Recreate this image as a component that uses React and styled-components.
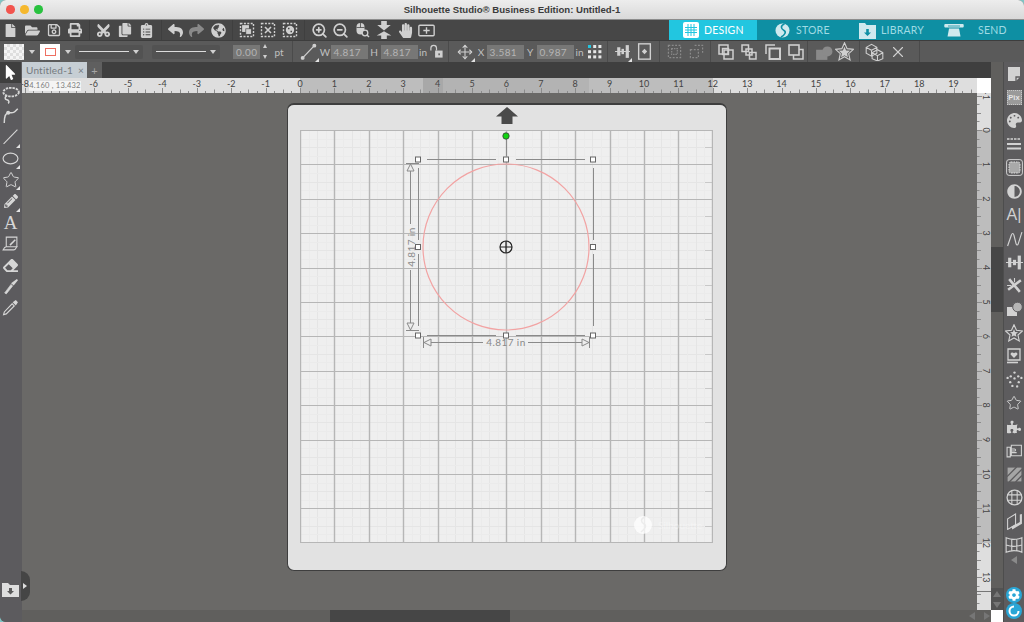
import React from 'react'
import styled, { createGlobalStyle } from 'styled-components'
import {
  FaFile, FaFolderOpen, FaRegSave, FaPrint, FaCut, FaCopy, FaClipboardList,
  FaReply, FaShare, FaGlobeAmericas, FaHandPaper, FaMousePointer, FaPencilAlt,
  FaEraser, FaPalette, FaAdjust, FaPuzzlePiece, FaCog
} from 'react-icons/fa'
import { ZoomIn, ZoomOut, Move, X, Star } from 'lucide-react'

const GlobalStyle = createGlobalStyle`
  html, body {
    margin: 0;
    padding: 0;
    background: #7fc4c4;
  }
  * { box-sizing: border-box; }
`

const Shell = styled.div`
  width: 1024px;
  height: 622px;
  display: flex;
  flex-direction: column;
  overflow: hidden;
  border-radius: 6px 6px 0 6px;
  font-family: "Lato", "Liberation Sans", sans-serif;
  background: #6a6967;
`

const TitleBar = styled.header`
  height: 20px;
  flex: none;
  display: flex;
  align-items: center;
  justify-content: center;
  position: relative;
  background: linear-gradient(#ededed, #d9d9d9);
  border-bottom: 1px solid #8d8d8d;
  font: bold 9.6px "Liberation Sans", sans-serif;
  color: #3b3b3b;
`

const Lights = styled.div`
  position: absolute;
  left: 6px;
  top: 5px;
  display: flex;
  gap: 5.5px;
`

const Light = styled.span`
  width: 8.5px;
  height: 8.5px;
  border-radius: 50%;
  background: ${p => p.$color};
`

const TopRow = styled.div`
  height: 21px;
  flex: none;
  display: flex;
  background: #474747;
  border-bottom: 1px solid #3d3d3d;
`

const SecondRow = styled.div`
  height: 21px;
  flex: none;
  display: flex;
  background: #5a5a5a;
  color: #d0d0d0;
`

const Group = styled.div`
  display: flex;
  align-items: center;
  flex: none;
  padding: ${p => p.$pad || '0 3px'};
  border-right: 1px solid #3f3f3f;
  color: #d0d0d0;
  &:last-of-type { border-right: 0; }
`

const Seg = styled.div`
  display: flex;
  align-items: center;
  flex: none;
  width: ${p => p.$w}px;
  padding-left: ${p => p.$pad || 0}px;
  border-right: 1px solid #4b4b4b;
`

const Btn = styled.span`
  flex: none;
  position: relative;
  display: flex;
  align-items: center;
  justify-content: center;
  width: ${p => p.$w || 21.5}px;
  height: 21px;
  color: ${p => (p.$dim ? '#8a8a8a' : 'inherit')};
  ${p => p.$corner && `
    &::after {
      content: '';
      position: absolute;
      right: 1px;
      bottom: 0;
      border-style: solid;
      border-width: 0 0 4px 4px;
      border-color: transparent transparent #e2e2e2 transparent;
    }
  `}
`

const CutIcon = styled(FaCut)`
  transform: rotate(-90deg);
`

const Tabs = styled.nav`
  margin-left: auto;
  width: 355px;
  height: 20px;
  display: flex;
  background: #0e8fa3;
`

const TabItem = styled.div`
  display: flex;
  align-items: center;
  width: ${p => p.$w}px;
  padding-left: ${p => p.$pad}px;
  gap: ${p => p.$gap}px;
  font-size: 10.5px;
  letter-spacing: 0.02em;
  color: ${p => (p.$active ? '#ffffff' : '#9fdbe4')};
  background: ${p => (p.$active ? '#22c6e0' : 'transparent')};
`

const Swatch = styled.span`
  flex: none;
  width: 20px;
  height: 16px;
  background: #fff;
  ${p => p.$checker && `
    background: repeating-conic-gradient(#dedede 0 25%, #f4f4f4 0 50%) 0 0 / 6px 6px;
  `}
  display: flex;
  align-items: center;
  justify-content: center;
`

const StrokeBox = styled.span`
  width: 11px;
  height: 8px;
  border: 1px solid #ee6f62;
`

const Caret = styled.span`
  flex: none;
  width: ${p => p.$w}px;
  display: flex;
  justify-content: center;
  &::before {
    content: '';
    border-style: solid;
    border-width: 4px 3px 0 3px;
    border-color: #d0d0d0 transparent transparent transparent;
  }
`

const LineSelect = styled.div`
  flex: none;
  width: 68px;
  height: 14px;
  margin-right: ${p => p.$mr}px;
  padding: 0 4px;
  display: flex;
  align-items: center;
  justify-content: space-between;
  background: #525252;
  border-radius: 2px;
  &::before {
    content: '';
    width: 50px;
    height: 1px;
    background: #dcdcdc;
  }
  &::after {
    content: '';
    border-style: solid;
    border-width: 4px 3px 0 3px;
    border-color: #d0d0d0 transparent transparent transparent;
  }
`

const NumInput = styled.div`
  flex: none;
  width: ${p => p.$w || 37}px;
  height: 14px;
  padding-left: 3px;
  background: #777776;
  color: #b4b4b4;
  font: 10px/14px "Lato", sans-serif;
  letter-spacing: 0.04em;
`

const Spinner = styled.span`
  flex: none;
  width: 9px;
  height: 15px;
  display: flex;
  flex-direction: column;
  justify-content: space-between;
  align-items: center;
  &::before {
    content: '';
    border-style: solid;
    border-width: 0 2.5px 4px 2.5px;
    border-color: transparent transparent #cfcfcf transparent;
  }
  &::after {
    content: '';
    border-style: solid;
    border-width: 4px 2.5px 0 2.5px;
    border-color: #cfcfcf transparent transparent transparent;
  }
`

const Label = styled.span`
  flex: none;
  width: ${p => p.$w}px;
  text-align: center;
  color: #c0c0c0;
  font-size: 10px;
`

const Body = styled.div`
  flex: 1;
  min-height: 0;
  display: flex;
`

const LeftBar = styled.aside`
  width: 22px;
  flex: none;
  display: flex;
  flex-direction: column;
  position: relative;
  background: #5c5b5e;
  color: #d6d6d6;
`

const ToolBtn = styled(Btn)`
  width: 21px;
  height: 21.4px;
  background: ${p => (p.$active ? '#3f3f3f' : 'transparent')};
  color: ${p => (p.$active ? '#fff' : 'inherit')};
`

const ToolGlyph = styled.span`
  font: 19px/1 "Liberation Serif", serif;
  color: #d6d6d6;
`

const ImportBtn = styled(Btn)`
  margin-top: auto;
  margin-bottom: 22px;
  width: 21px;
  color: #dedede;
`

const SlideHandle = styled.span`
  position: absolute;
  left: 21px;
  bottom: 21px;
  width: 9px;
  height: 30px;
  border-radius: 0 15px 15px 0;
  background: #454545;
  display: flex;
  align-items: center;
  padding-left: 2px;
  z-index: 2;
  &::before {
    content: '';
    border-style: solid;
    border-width: 3px 0 3px 4px;
    border-color: transparent transparent transparent #ddd;
  }
`

const Center = styled.main`
  width: 969px;
  flex: none;
  display: flex;
  flex-direction: column;
`

const TabStrip = styled.div`
  height: 16px;
  flex: none;
  display: flex;
  background: #3f3f3f;
`

const DocTab = styled.div`
  width: 65px;
  display: flex;
  align-items: center;
  justify-content: space-between;
  padding: 0 3px 0 4px;
  background: #c6ced4;
  color: #757a7e;
  font-size: 10px;
  letter-spacing: 0.02em;
`

const PlusTab = styled.div`
  width: 15px;
  display: flex;
  align-items: center;
  justify-content: center;
  background: #5f5f5f;
  color: #a5a5a5;
  font-size: 11px;
`

const RulerWrap = styled.div`
  position: relative;
  height: 15px;
  flex: none;
  background: #dedede;
  svg { display: block; }
`

const CoordTip = styled.span`
  position: absolute;
  left: 7px;
  top: 3px;
  width: 52px;
  height: 10px;
  background: #f4f4f4;
  color: #7c7c7c;
  font: 7.5px/10px "Lato", sans-serif;
  letter-spacing: 0.03em;
  text-align: center;
`

const CanvasRow = styled.div`
  flex: 1;
  min-height: 0;
  display: flex;
`

const Canvas = styled.section`
  flex: 1;
  min-width: 0;
  padding: 10px 0 0 265px;
  background: #6a6967;
`

const VRuler = styled.div`
  width: 14px;
  flex: none;
  svg {
    display: block;
    overflow: visible;
  }
`

const Mat = styled.div`
  width: 440px;
  height: 468px;
  display: flex;
  flex-direction: column;
  padding-left: 12px;
  border: 1px solid #3e3e3e;
  border-top-width: 2px;
  border-radius: 7px;
  background: #e2e2e2;
`

const MatHead = styled.div`
  width: 413px;
  height: 25px;
  flex: none;
  display: flex;
  align-items: flex-start;
  justify-content: center;
  padding-top: 2px;
  color: #4a4a4a;
`

const GridFrame = styled.div`
  position: relative;
  width: 413px;
  height: 413px;
  background: #efefef;
  svg { display: block; }
`

const SelectionLayer = styled.svg`
  position: absolute;
  left: 0;
  top: 0;
  overflow: visible;
`

const HScroll = styled.div`
  height: 12px;
  flex: none;
  display: flex;
  padding-left: 308px;
  background: #605f5d;
`

const HThumb = styled.span`
  width: 180px;
  background: #464646;
`

const ScrollArrows = styled.span`
  margin-left: auto;
  margin-right: 1px;
  display: flex;
  width: 21px;
  align-items: center;
  justify-content: space-between;
`

const ArrowLeft = styled.span`
  border-style: solid;
  border-width: 4.5px 6px 4.5px 0;
  border-color: transparent #767676 transparent transparent;
`

const ArrowRight = styled.span`
  border-style: solid;
  border-width: 4.5px 0 4.5px 6px;
  border-color: transparent transparent transparent #767676;
`

const VScroll = styled.div`
  width: 12px;
  flex: none;
  display: flex;
  flex-direction: column;
  padding-top: 185px;
  background: #605f5d;
`

const VThumb = styled.span`
  height: 65px;
  flex: none;
  background: #464646;
`

const VArrows = styled.span`
  margin-top: auto;
  height: 22px;
  display: flex;
  flex-direction: column;
  align-items: center;
  justify-content: space-around;
  background: #525252;
  &::before {
    content: '';
    border-style: solid;
    border-width: 0 4.5px 6px 4.5px;
    border-color: transparent transparent #767676 transparent;
  }
  &::after {
    content: '';
    border-style: solid;
    border-width: 6px 4.5px 0 4.5px;
    border-color: #767676 transparent transparent transparent;
  }
`

const Corner = styled.span`
  height: 12px;
  flex: none;
  background: #fff;
`

const RightBar = styled.aside`
  width: 21px;
  flex: none;
  display: flex;
  flex-direction: column;
  align-items: center;
  border-left: 1px solid #4d4d4d;
  background: #5d5c5e;
  color: #d2d2d2;
`

const PanelBtn = styled(Btn)`
  width: 20px;
  height: 23.55px;
`

const PanelText = styled.span`
  font: 16px/1 "Liberation Sans", sans-serif;
  color: #d2d2d2;
`

const PixText = styled.span`
  display: block;
  width: 15px;
  height: 15px;
  border: 1px dotted #c8c8c8;
  background: #9a9a9a;
  color: #e6e6e6;
  font: bold 7.5px/13px "Liberation Sans", sans-serif;
  text-align: center;
`

const Collapse = styled.span`
  flex: none;
  border-style: solid;
  border-width: 4px 6px 4px 0;
  border-color: transparent #8a8a8a transparent transparent;
`

const RoundBtn = styled.span`
  margin-top: ${p => p.$mt}px;
  flex: none;
  width: 16px;
  height: 16px;
  border-radius: 50%;
  display: flex;
  align-items: center;
  justify-content: center;
  background: #2aa6d6;
  color: #fff;
`

const Ico = ({ s = 16, children }) => (
  <svg width={s} height={s} viewBox="0 0 16 16" fill="none" stroke="currentColor" strokeWidth="1.3">{children}</svg>
)

const DashedSq = () => <rect x="1.5" y="1.5" width="13" height="13" strokeDasharray="2 1.4" strokeWidth="1.4" />

const GroupIcon = () => (
  <Ico><DashedSq /><rect x="3.8" y="3.8" width="5.5" height="5.5" fill="currentColor" /><rect x="6.8" y="6.8" width="5.5" height="5.5" fill="currentColor" stroke="#474747" strokeWidth=".7" /></Ico>
)
const UngroupIcon = () => (
  <Ico><DashedSq /><path d="M5 5l6 6M11 5l-6 6" strokeWidth="1.6" /></Ico>
)
const CompoundIcon = () => (
  <Ico><DashedSq /><circle cx="8" cy="8" r="4.2" fill="currentColor" stroke="none" /><path d="M6 6.5h1.5M8.5 9.5H10" stroke="#474747" /></Ico>
)
const MouseZoomIcon = () => (
  <Ico><rect x="2.5" y="1" width="8" height="11.5" rx="4" fill="currentColor" stroke="none" /><path d="M2.5 5.5h8M6.5 1v4.5" stroke="#474747" strokeWidth=".8" /><circle cx="11" cy="11" r="2.8" fill="#474747" /><path d="M13 13l2 2" strokeWidth="1.4" /></Ico>
)
const PanVertIcon = () => (
  <Ico s={18}><path d="M5.5 0h5v3.5H14L8 8.5 2 3.5h3.5zM8 9l6.5 3.8h-4V16h-5v-3.2h-4z" fill="currentColor" stroke="none" /></Ico>
)
const FitIcon = () => (
  <Ico s={17}><rect x=".8" y="3" width="14.4" height="10" rx="1" /><path d="M8 5v6M5 8h6" /></Ico>
)

const LineIcon = () => (
  <Ico s={17}><path d="M2.5 14L13.5 2.5" strokeWidth="1.2" /><circle cx="2.5" cy="14" r="1.2" fill="currentColor" /><circle cx="13.5" cy="2.5" r="1.2" fill="currentColor" /></Ico>
)
const LockIcon = () => (
  <Ico s={15}><path d="M2 7V4.5a3 3 0 0 1 6 0V7" /><rect x="6.5" y="7" width="8" height="7.5" fill="currentColor" stroke="none" /><rect x="10" y="10" width="1.6" height="2" fill="#5a5a5a" stroke="none" /></Ico>
)
const DotsIcon = () => {
  const spots = []
  for (let r = 0; r < 3; r++) for (let c = 0; c < 3; c++) spots.push([r, c])
  return (
    <svg width="14" height="14" viewBox="0 0 14 14">
      {spots.map(([r, c]) => (
        <rect key={`${r}-${c}`} x={c * 5.2} y={r * 5.2} width="3" height="3" fill={r + c === 0 ? '#22c6e0' : '#e6e6e6'} />
      ))}
    </svg>
  )
}
const DistIcon = () => (
  <Ico s={17}><path d="M1 8h14" strokeWidth="1" /><rect x="3" y="4" width="3" height="8" fill="currentColor" stroke="none" /><rect x="7" y="5.5" width="2.4" height="5" fill="currentColor" stroke="none" /><rect x="11" y="2" width="3" height="12" fill="currentColor" stroke="none" /></Ico>
)
const PageCenterIcon = () => (
  <Ico s={17}><rect x="2.5" y=".8" width="11" height="14.4" /><path d="M8 5.5l2.5 2.5L8 10.5 5.5 8z" fill="currentColor" stroke="none" /></Ico>
)
const DimSqOne = () => (
  <Ico s={15}><rect x="1.5" y="1.5" width="13" height="13" strokeDasharray="2 1.6" /><rect x="5" y="5" width="6" height="6" strokeDasharray="1.5 1" /></Ico>
)
const DimSqTwo = () => (
  <Ico s={15}><path d="M6 1.5h8.5V10" strokeDasharray="2 1.6" /><rect x="1.5" y="6" width="8.5" height="8.5" strokeDasharray="2 1.6" /></Ico>
)
const ArrangeA = () => (
  <Ico><rect x="1" y="1" width="9" height="9" strokeWidth="1.5" /><rect x="6" y="6" width="9" height="9" strokeWidth="1.5" /><rect x="4.5" y="4.5" width="6" height="6" strokeWidth="1.4" /></Ico>
)
const ArrangeB = () => (
  <Ico><rect x="1" y="1" width="6.5" height="6.5" strokeWidth="1.5" /><rect x="8.5" y="8.5" width="6.5" height="6.5" strokeWidth="1.5" /><rect x="5" y="5" width="6" height="6" strokeWidth="1.5" /></Ico>
)
const ArrangeC = () => (
  <Ico><path d="M1 10V1h9" strokeWidth="1.5" /><rect x="4.5" y="4.5" width="10.5" height="10.5" strokeWidth="2" /></Ico>
)
const ArrangeD = () => (
  <Ico><rect x="1" y="1" width="10" height="10" strokeWidth="1.6" /><path d="M11 5.5h4V15H5.5v-4" strokeWidth="1.5" /></Ico>
)
const WeldIcon = () => (
  <Ico s={18}><rect x="1" y="6" width="10" height="9" fill="currentColor" stroke="none" /><circle cx="11" cy="7.5" r="4.5" fill="currentColor" stroke="none" /></Ico>
)
const StarOutlined = () => (
  <svg width="19" height="19" viewBox="0 0 24 24">
    <path d="M12 1l3.3 7.4 8 .9-6 5.4 1.7 7.9-7-4-7 4 1.7-7.9-6-5.4 8-.9z" fill="none" stroke="#d0d0d0" strokeWidth="1.4" />
    <path d="M12 6l2 4.6 5 .5-3.7 3.3 1 4.9-4.3-2.5-4.3 2.5 1-4.9L5 11.1l5-.5z" fill="#d0d0d0" />
  </svg>
)
const CubesIcon = () => (
  <Ico s={19}><path d="M1 4.5L5.5 2 10 4.5v5L5.5 12 1 9.5zM1 4.5L5.5 7 10 4.5M5.5 7v5" strokeWidth=".9" /><path d="M6 9l4.5-2.5L15 9v5l-4.5 2-4.5-2zM6 9l4.5 2.5L15 9M10.5 11.5V16" strokeWidth=".9" /></Ico>
)

const LassoIcon = () => (
  <Ico s={19}><ellipse cx="8.5" cy="6" rx="6.5" ry="3.6" strokeWidth="1.6" strokeDasharray="2 .8" /><path d="M5 9c-2 1-2 3 0 3.5s2 2 1 3" strokeWidth="1.3" /></Ico>
)
const CurveIcon = () => (
  <Ico s={18}><path d="M2 15c0-5 1-9 4-9 3.5 0 4 1 8-3.5" strokeWidth="1.3" /><circle cx="5.5" cy="6" r="1.8" fill="currentColor" stroke="none" /></Ico>
)
const ToolLine = () => <Ico s={17}><path d="M1.5 15L14.5 1.5" strokeWidth="1" /></Ico>
const ToolEllipse = () => <Ico s={17}><ellipse cx="8" cy="8" rx="7" ry="5" strokeWidth="1.1" /></Ico>
const SketchIcon = () => (
  <Ico s={17}><path d="M4 2h10v9H4zM1 14c1-2 2-3 3-3h10c-1 1-1 3-3 3z" strokeWidth="1" /><path d="M7 9l5-5 1 1-5 5z" fill="currentColor" stroke="none" /></Ico>
)
const KnifeIcon = () => (
  <Ico s={17}><path d="M14 1l1 1-4 5-2.5-2z" fill="currentColor" stroke="none" /><path d="M8.5 6L10 7.5 4 15 2.5 14z" strokeWidth=".6" fill="currentColor" /></Ico>
)
const DropperIcon = () => (
  <Ico s={17}><path d="M10 3l3-2 2 2-2 3z" fill="currentColor" stroke="none" /><path d="M9.5 4.5l2 2L4 14l-2.5.8.7-2.6z" strokeWidth="1.1" /></Ico>
)
const ImportIcon = () => (
  <svg width="17" height="16" viewBox="0 0 17 16">
    <path d="M0 1h6l2 2h9v12H0z" fill="#dedede" />
    <path d="M7 6h3v3h2l-3.5 3.5L5 9h2z" fill="#5a5a5a" />
  </svg>
)

const PageIcon = () => (
  <Ico s={16}><path d="M2 1h12v10l-4 4H2z" fill="currentColor" stroke="none" /><path d="M14 11h-4v4" stroke="#5d5c5e" /></Ico>
)
const LinesIcon = () => (
  <Ico s={16}><path d="M1 3h14" strokeDasharray="2.5 1" strokeWidth="1.4" /><path d="M1 8h14M1 12.5h14" strokeWidth="2" /></Ico>
)
const FrameIcon = () => (
  <svg width="17" height="17" viewBox="0 0 17 17">
    <rect x=".6" y=".6" width="15.8" height="15.8" rx="2.5" fill="none" stroke="#d2d2d2" strokeWidth="1" />
    <rect x="3" y="3" width="11" height="11" rx="2" fill="#a9a9a9" stroke="#e2e2e2" strokeWidth="1" strokeDasharray="1.5 1" />
  </svg>
)
const TextCurve = () => (
  <Ico s={17}><path d="M1.5 15L5 5c1-2.5 2-2 2.5 0l2 8c.5 1.5 1.5 1.5 2 0L15 2" strokeWidth="1.1" /></Ico>
)
const AlignBars = () => (
  <Ico s={17}><path d="M0 8h16" strokeWidth="1" /><rect x="2" y="3.5" width="3" height="9" fill="currentColor" stroke="none" /><rect x="6.5" y="5.5" width="3" height="5" fill="currentColor" stroke="none" /><rect x="11" y="1.5" width="3" height="13" fill="currentColor" stroke="none" /></Ico>
)
const SparkIcon = () => (
  <Ico s={17}><path d="M3 2l10 12M14 3L2 12" strokeWidth="2.4" /><path d="M8 1v4M1 8h4" strokeWidth="1" /></Ico>
)
const ShapesIcon = () => (
  <svg width="17" height="16" viewBox="0 0 17 16">
    <rect x="1" y="6" width="10" height="9" fill="#d2d2d2" />
    <circle cx="11.5" cy="6" r="4.8" fill="#b5b5b5" stroke="#5d5c5e" />
  </svg>
)
const StarBadge = () => (
  <svg width="18" height="18" viewBox="0 0 24 24">
    <path d="M12 1l3.3 7.4 8 .9-6 5.4 1.7 7.9-7-4-7 4 1.7-7.9-6-5.4 8-.9z" fill="none" stroke="#d2d2d2" strokeWidth="1.5" />
    <path d="M12 7l1.5 3.5 3.8.4-2.8 2.5.8 3.7-3.3-1.9-3.3 1.9.8-3.7-2.8-2.5 3.8-.4z" fill="#d2d2d2" />
  </svg>
)
const HeartSheet = () => (
  <Ico s={16}><path d="M2 1h12v11H2z" strokeWidth="1.3" /><path d="M8 10L4.8 6.8C3.8 5 6.5 3.5 8 5.3 9.5 3.5 12.2 5 11.2 6.8z" fill="currentColor" stroke="none" /><path d="M1 14.5h11" strokeWidth="1.6" /></Ico>
)
const StarDots = () => {
  const pts = [[8, 1.5], [4.5, 5], [11.5, 5], [1.5, 6.5], [14.5, 6.5], [8, 7], [4, 10.5], [12, 10.5], [6, 14], [10.5, 14.5]]
  return (
    <svg width="17" height="17" viewBox="0 0 16 16">
      {pts.map(([x, y]) => <circle key={`${x}-${y}`} cx={x} cy={y} r="1.1" fill="#d2d2d2" />)}
    </svg>
  )
}
const FingersIcon = () => (
  <Ico s={17}><path d="M1 5h3v9H1zM5 3h9.5v10H5zM5 6.5h3a1 1 0 0 1 0 2H5M5 10h5" strokeWidth="1" /></Ico>
)
const HatchIcon = () => (
  <Ico s={17}><rect x="1.5" y="1.5" width="13" height="13" fill="#a5a5a5" stroke="none" /><path d="M1 10l9-9M3 15L15 3M9 15l6-6" stroke="#5d5c5e" strokeWidth="1.3" /></Ico>
)
const GlobeGrid = () => (
  <Ico s={17}><circle cx="8" cy="8" r="7" strokeWidth="1.2" /><path d="M1 5.5h14M1 10.5h14M5.5 1v14M10.5 1v14" strokeWidth="1" /></Ico>
)
const SkewIcon = () => (
  <Ico s={17}><path d="M1.5 5.5L9 1v10l-7.5 4.5z" strokeWidth="1" /><path d="M5 13l8-4.5V1.5l2-.5v9l-9 5.5z" fill="currentColor" stroke="none" /></Ico>
)
const WarpIcon = () => (
  <Ico s={18}><path d="M1 1.5c4.5 2 9.5 2 14 0v13c-4.5-2-9.5-2-14 0zM6 2.7v10.600M10.500 2.700v10.600M1 8c4.500 1.500 9.500 1.500 14 0" strokeWidth="1" /></Ico>
)
const RingIcon = () => (
  <svg width="12" height="12" viewBox="0 0 12 12">
    <path d="M10.5 6A4.5 4.5 0 1 1 6 1.5" fill="none" stroke="#fff" strokeWidth="2" />
  </svg>
)

const DesignIcon = () => (
  <svg width="16" height="16" viewBox="0 0 16 16">
    <rect width="16" height="16" rx="2" fill="#fff" />
    <path d="M2 5.5h12M2 8h12M2 10.5h12M5 2v12M8 2v12M11 2v12" stroke="#22c6e0" strokeWidth="1" />
  </svg>
)
const StoreIcon = () => (
  <svg width="15" height="15" viewBox="0 0 15 15">
    <circle cx="7.5" cy="7.5" r="7" fill="#cfe9ee" />
    <path d="M9.5 1C5 2.5 6 6 9 7.5c2.5 1.3 1 4.5-3 6.5" fill="none" stroke="#0e8fa3" strokeWidth="1.6" />
  </svg>
)
const LibraryIcon = () => (
  <svg width="17" height="17" viewBox="0 0 17 17">
    <path d="M0 1h6l1.5 2H17v14H0z" fill="#cfe9ee" />
    <path d="M7.2 7h2.600v3.500H12L8.500 14 5 10.500h2.200z" fill="#0e8fa3" />
  </svg>
)
const SendIcon = () => (
  <svg width="20" height="14" viewBox="0 0 20 14">
    <path d="M1 1h18c1 0 1 3.5 0 3.5H1c-1 0-1-3.5 0-3.5z" fill="#cfe9ee" />
    <path d="M5 5.5h10l1.5 8h-13z" fill="#cfe9ee" />
    <path d="M4 3h12" stroke="#0e8fa3" strokeWidth=".8" />
  </svg>
)

const UpArrow = () => (
  <svg width="22" height="17" viewBox="0 0 22 17">
    <path d="M11 0l11 9.5h-5.5V17h-11V9.5H0z" fill="currentColor" />
  </svg>
)

const PX = 34.4
const range = (a, b) => Array.from({ length: b - a + 1 }, (_, i) => a + i)
const crisp = v => Math.round(v) + 0.5

const TopRuler = () => {
  const x0 = 278
  const ticks = range(-32, 80)
  return (
    <svg width="969" height="15">
      <rect x="278" width="413" height="15" fill="#bdbdbd" />
      <rect x="401" width="166" height="15" fill="#b3b3b3" />
      <rect x="401" width="20" height="15" fill="#a8a8a8" />
      <rect x="955" width="14" height="15" fill="#ffffff" />
      {ticks.map(i => {
        const x = crisp(x0 + (i * PX) / 4)
        if (x > 954) return null
        const h = i % 4 === 0 ? 5 : i % 2 === 0 ? 3.5 : 2
        return <line key={i} x1={x} x2={x} y1={15 - h} y2="15" stroke="#8b8b8b" />
      })}
      {range(-8, 19).filter(n => n !== -7).map(n => (
        <text key={n} x={x0 + n * PX} y="9" textAnchor="middle" fontFamily="Lato, sans-serif" fontSize="9" fill="#444">{n}</text>
      ))}
    </svg>
  )
}

const SideRuler = () => {
  const y0 = 37
  return (
    <svg width="14" height="517">
      <rect width="14" height="517" fill="#dedede" />
      <rect y="37" width="14" height="413" fill="#bdbdbd" />
      {range(-6, 76).map(i => {
        const y = crisp(y0 + (i * PX) / 4)
        if (y < 0) return null
        const w = i % 4 === 0 ? 5 : i % 2 === 0 ? 4 : 2.5
        return <line key={i} x1="0" x2={w} y1={y} y2={y} stroke="#8b8b8b" />
      })}
      {range(-1, 13).map(n => (
        <text key={n} transform={`translate(5.5 ${y0 + n * PX}) rotate(90)`} textAnchor="middle" fontFamily="Lato, sans-serif" fontSize="9" fill="#444">{n}</text>
      ))}
      <line x1="0" x2="14" y1="498.5" y2="498.5" stroke="#777" />
    </svg>
  )
}

const MatGrid = () => (
  <svg width="413" height="413">
    {range(0, 48).map(i => {
      const p = crisp((i * PX) / 4)
      const c = i % 2 === 0 ? '#e5e5e5' : '#ebebeb'
      return i % 4 === 0 ? null : (
        <g key={i} stroke={c}>
          <line x1={p} x2={p} y1="0" y2="413" />
          <line x1="0" x2="413" y1={p} y2={p} />
        </g>
      )
    })}
    {range(0, 11).map(i => {
      const y = crisp((i + 0.5) * PX)
      return <line key={i} x1="405" x2="413" y1={y} y2={y} stroke="#c8c8c8" />
    })}
    {range(0, 12).map(i => {
      const p = Math.min(crisp(i * PX), 412.5)
      return (
        <g key={i} stroke="#b6b6b6">
          <line x1={p} x2={p} y1="0" y2="413" strokeWidth="1.4" />
          <line x1="0" x2="413" y1={p} y2={p} />
        </g>
      )
    })}
  </svg>
)

const Handle = ({ x, y }) => <rect x={x - 2.5} y={y - 2.5} width="5" height="5" fill="#fff" stroke="#666" strokeWidth="1" />

// selection box around the circle, page coordinates minus the grid's corner
const Selection = () => {
  const left = 118
  const midX = 206
  const right = 293
  const top = 29.5
  const midY = 117
  const bottom = 205.5
  const ink = '#8a8a8a'
  return (
    <SelectionLayer width="413" height="413" viewBox="0 0 413 413">
      <circle cx={midX} cy={midY} r="83" fill="none" stroke="#f2a3a3" strokeWidth="1.2" />
      <g stroke={ink} strokeWidth="1" fill="none">
        <path d={`M${midX + .5} 9V26`} />
        <path d={`M127 ${top}H196M216 ${top}H285`} />
        <path d={`M127 ${bottom}H196M216 ${bottom}H285`} />
        <path d={`M${left + .5} 38V110M${left + .5} 124V196`} />
        <path d={`M${right + .5} 38V110M${right + .5} 124V196`} />
        <path d="M110.5 33V94M110.5 140V201M106 33.5H119M106 200.5H119" />
        <path d="M110.5 34l-3.5 7h7zM110.5 200l-3.5-7h7z" fill="#eee" />
        <path d="M123.5 207V218M289.5 207V218M124 212.5H183M228 212.5H289" />
        <path d="M124 212.5l7-3.5v7zM289 212.5l-7-3.5v7z" fill="#eee" />
      </g>
      <text x={midX} y="216" textAnchor="middle" fontFamily="Lato, sans-serif" fontSize="10" letterSpacing=".4" fill={ink}>4.817 in</text>
      <text transform="translate(114.5 117) rotate(-90)" textAnchor="middle" fontFamily="Lato, sans-serif" fontSize="10" letterSpacing=".4" fill={ink}>4.817 in</text>
      {[left, midX, right].map(x => [top, midY, bottom].map(y => (
        (x === midX && y === midY) ? null : <Handle key={`${x}-${y}`} x={x} y={y} />
      )))}
      <circle cx={midX} cy="6" r="3.2" fill="#11d411" stroke="#3b3b3b" strokeWidth=".8" />
      <g stroke="#222" strokeWidth="1.2" fill="none">
        <circle cx={midX} cy={midY} r="6" />
        <path d={`M${midX - 6} ${midY}H${midX + 6}M${midX} ${midY - 6}V${midY + 6}`} />
      </g>
      <circle cx="343" cy="395" r="9" fill="#fff" opacity=".75" />
      <path d="M345 387c-5 2-4 5-1 7 3 1.5 1 5-3 8" fill="none" stroke="#ececec" strokeWidth="1.5" />
      <text x="358" y="399" fontFamily="Lato, sans-serif" fontSize="10" fill="#fff" opacity=".35">Silhouette</text>
    </SelectionLayer>
  )
}

const App = () => (
  <>
    <GlobalStyle />
    <Shell>
      <TitleBar>
        <Lights>
          <Light $color="#f2544e" />
          <Light $color="#f5b82e" />
          <Light $color="#29c23f" />
        </Lights>
        Silhouette Studio® Business Edition: Untitled-1
      </TitleBar>

      <TopRow>
        <Group $pad="0 3px 0 0">
          <Btn><FaFile size={13} /></Btn>
          <Btn><FaFolderOpen size={15} /></Btn>
          <Btn><FaRegSave size={14} /></Btn>
          <Btn><FaPrint size={14} /></Btn>
        </Group>
        <Group>
          <Btn><CutIcon size={15} /></Btn>
          <Btn><FaCopy size={14} /></Btn>
          <Btn><FaClipboardList size={15} /></Btn>
        </Group>
        <Group>
          <Btn><FaReply size={15} /></Btn>
          <Btn $dim><FaShare size={15} /></Btn>
          <Btn><FaGlobeAmericas size={15} /></Btn>
        </Group>
        <Group>
          <Btn><GroupIcon /></Btn>
          <Btn><UngroupIcon /></Btn>
          <Btn><CompoundIcon /></Btn>
        </Group>
        <Group $pad="0 0 0 4px">
          <Btn><ZoomIn size={17} strokeWidth={2.4} /></Btn>
          <Btn><ZoomOut size={17} strokeWidth={2.4} /></Btn>
          <Btn><MouseZoomIcon /></Btn>
          <Btn><PanVertIcon /></Btn>
          <Btn><FaHandPaper size={15} /></Btn>
          <Btn><FitIcon /></Btn>
        </Group>
        <Tabs>
          <TabItem $active $w={88} $pad={14} $gap={5}><DesignIcon />DESIGN</TabItem>
          <TabItem $w={84} $pad={18} $gap={6}><StoreIcon />STORE</TabItem>
          <TabItem $w={87} $pad={18} $gap={5}><LibraryIcon />LIBRARY</TabItem>
          <TabItem $w={96} $pad={16} $gap={14}><SendIcon />SEND</TabItem>
        </Tabs>
      </TopRow>

      <SecondRow>
        <Seg $w={293} $pad={4}>
          <Swatch $checker />
          <Caret $w={16} />
          <Swatch><StrokeBox /></Swatch>
          <Caret $w={15} />
          <LineSelect $mr={9} />
          <LineSelect $mr={13} />
          <NumInput $w={27}>0.00</NumInput>
          <Spinner />
          <Label $w={20}>pt</Label>
        </Seg>
        <Seg $w={156} $pad={5}>
          <Btn $corner><LineIcon /></Btn>
          <Label $w={11}>W</Label>
          <NumInput>4.817</NumInput>
          <Label $w={13}>H</Label>
          <NumInput>4.817</NumInput>
          <Label $w={11}>in</Label>
          <LockIcon />
        </Seg>
        <Seg $w={159} $pad={5}>
          <Btn $corner><Move size={16} strokeWidth={1.6} /></Btn>
          <Label $w={11}>X</Label>
          <NumInput>3.581</NumInput>
          <Label $w={13}>Y</Label>
          <NumInput>0.987</NumInput>
          <Label $w={12}>in</Label>
          <Btn $w={18}><DotsIcon /></Btn>
        </Seg>
        <Seg $w={52} $pad={3}>
          <Btn $w={22} $corner><DistIcon /></Btn>
          <Btn $w={22}><PageCenterIcon /></Btn>
        </Seg>
        <Seg $w={51} $pad={3}>
          <Btn $w={22} $dim><DimSqOne /></Btn>
          <Btn $w={22} $dim><DimSqTwo /></Btn>
        </Seg>
        <Seg $w={97} $pad={3}>
          <Btn $w={23.5}><ArrangeA /></Btn>
          <Btn $w={23.5}><ArrangeB /></Btn>
          <Btn $w={23.5}><ArrangeC /></Btn>
          <Btn $w={23.5}><ArrangeD /></Btn>
        </Seg>
        <Seg $w={52} $pad={6}>
          <Btn $w={20} $dim><WeldIcon /></Btn>
          <Btn $w={20}><StarOutlined /></Btn>
        </Seg>
        <Seg $w={60} $pad={3}>
          <Btn $w={23}><CubesIcon /></Btn>
          <Btn $w={23}><X size={18} strokeWidth={1.5} /></Btn>
        </Seg>
      </SecondRow>

      <Body>
        <LeftBar>
          <ToolBtn $active><FaMousePointer size={15} /></ToolBtn>
          <ToolBtn><LassoIcon /></ToolBtn>
          <ToolBtn><CurveIcon /></ToolBtn>
          <ToolBtn $corner><ToolLine /></ToolBtn>
          <ToolBtn $corner><ToolEllipse /></ToolBtn>
          <ToolBtn $corner><Star size={18} strokeWidth={1.3} /></ToolBtn>
          <ToolBtn $corner><FaPencilAlt size={14} /></ToolBtn>
          <ToolBtn><ToolGlyph>A</ToolGlyph></ToolBtn>
          <ToolBtn><SketchIcon /></ToolBtn>
          <ToolBtn><FaEraser size={15} /></ToolBtn>
          <ToolBtn><KnifeIcon /></ToolBtn>
          <ToolBtn><DropperIcon /></ToolBtn>
          <ImportBtn><ImportIcon /></ImportBtn>
          <SlideHandle />
        </LeftBar>

        <Center>
          <TabStrip>
            <DocTab>Untitled-1<span>×</span></DocTab>
            <PlusTab>+</PlusTab>
          </TabStrip>
          <RulerWrap>
            <TopRuler />
            <CoordTip>4.160 , 13.432</CoordTip>
          </RulerWrap>
          <CanvasRow>
            <Canvas>
              <Mat>
                <MatHead><UpArrow /></MatHead>
                <GridFrame>
                  <MatGrid />
                  <Selection />
                </GridFrame>
              </Mat>
            </Canvas>
            <VRuler><SideRuler /></VRuler>
          </CanvasRow>
          <HScroll>
            <HThumb />
            <ScrollArrows><ArrowLeft /><ArrowRight /></ScrollArrows>
          </HScroll>
        </Center>

        <VScroll>
          <VThumb />
          <VArrows />
          <Corner />
        </VScroll>

        <RightBar>
          <PanelBtn><PageIcon /></PanelBtn>
          <PanelBtn><PixText>Pix</PixText></PanelBtn>
          <PanelBtn><FaPalette size={15} /></PanelBtn>
          <PanelBtn><LinesIcon /></PanelBtn>
          <PanelBtn><FrameIcon /></PanelBtn>
          <PanelBtn><FaAdjust size={15} /></PanelBtn>
          <PanelBtn><PanelText>A|</PanelText></PanelBtn>
          <PanelBtn><TextCurve /></PanelBtn>
          <PanelBtn><AlignBars /></PanelBtn>
          <PanelBtn><SparkIcon /></PanelBtn>
          <PanelBtn><ShapesIcon /></PanelBtn>
          <PanelBtn><StarBadge /></PanelBtn>
          <PanelBtn><HeartSheet /></PanelBtn>
          <PanelBtn><StarDots /></PanelBtn>
          <PanelBtn><Star size={16} strokeWidth={1.4} /></PanelBtn>
          <PanelBtn><FaPuzzlePiece size={14} /></PanelBtn>
          <PanelBtn><FingersIcon /></PanelBtn>
          <PanelBtn><HatchIcon /></PanelBtn>
          <PanelBtn><GlobeGrid /></PanelBtn>
          <PanelBtn><SkewIcon /></PanelBtn>
          <PanelBtn><WarpIcon /></PanelBtn>
          <Collapse />
          <RoundBtn $mt={23}><FaCog size={12} /></RoundBtn>
          <RoundBtn $mt={0}><RingIcon /></RoundBtn>
        </RightBar>
      </Body>
    </Shell>
  </>
)

export default App
